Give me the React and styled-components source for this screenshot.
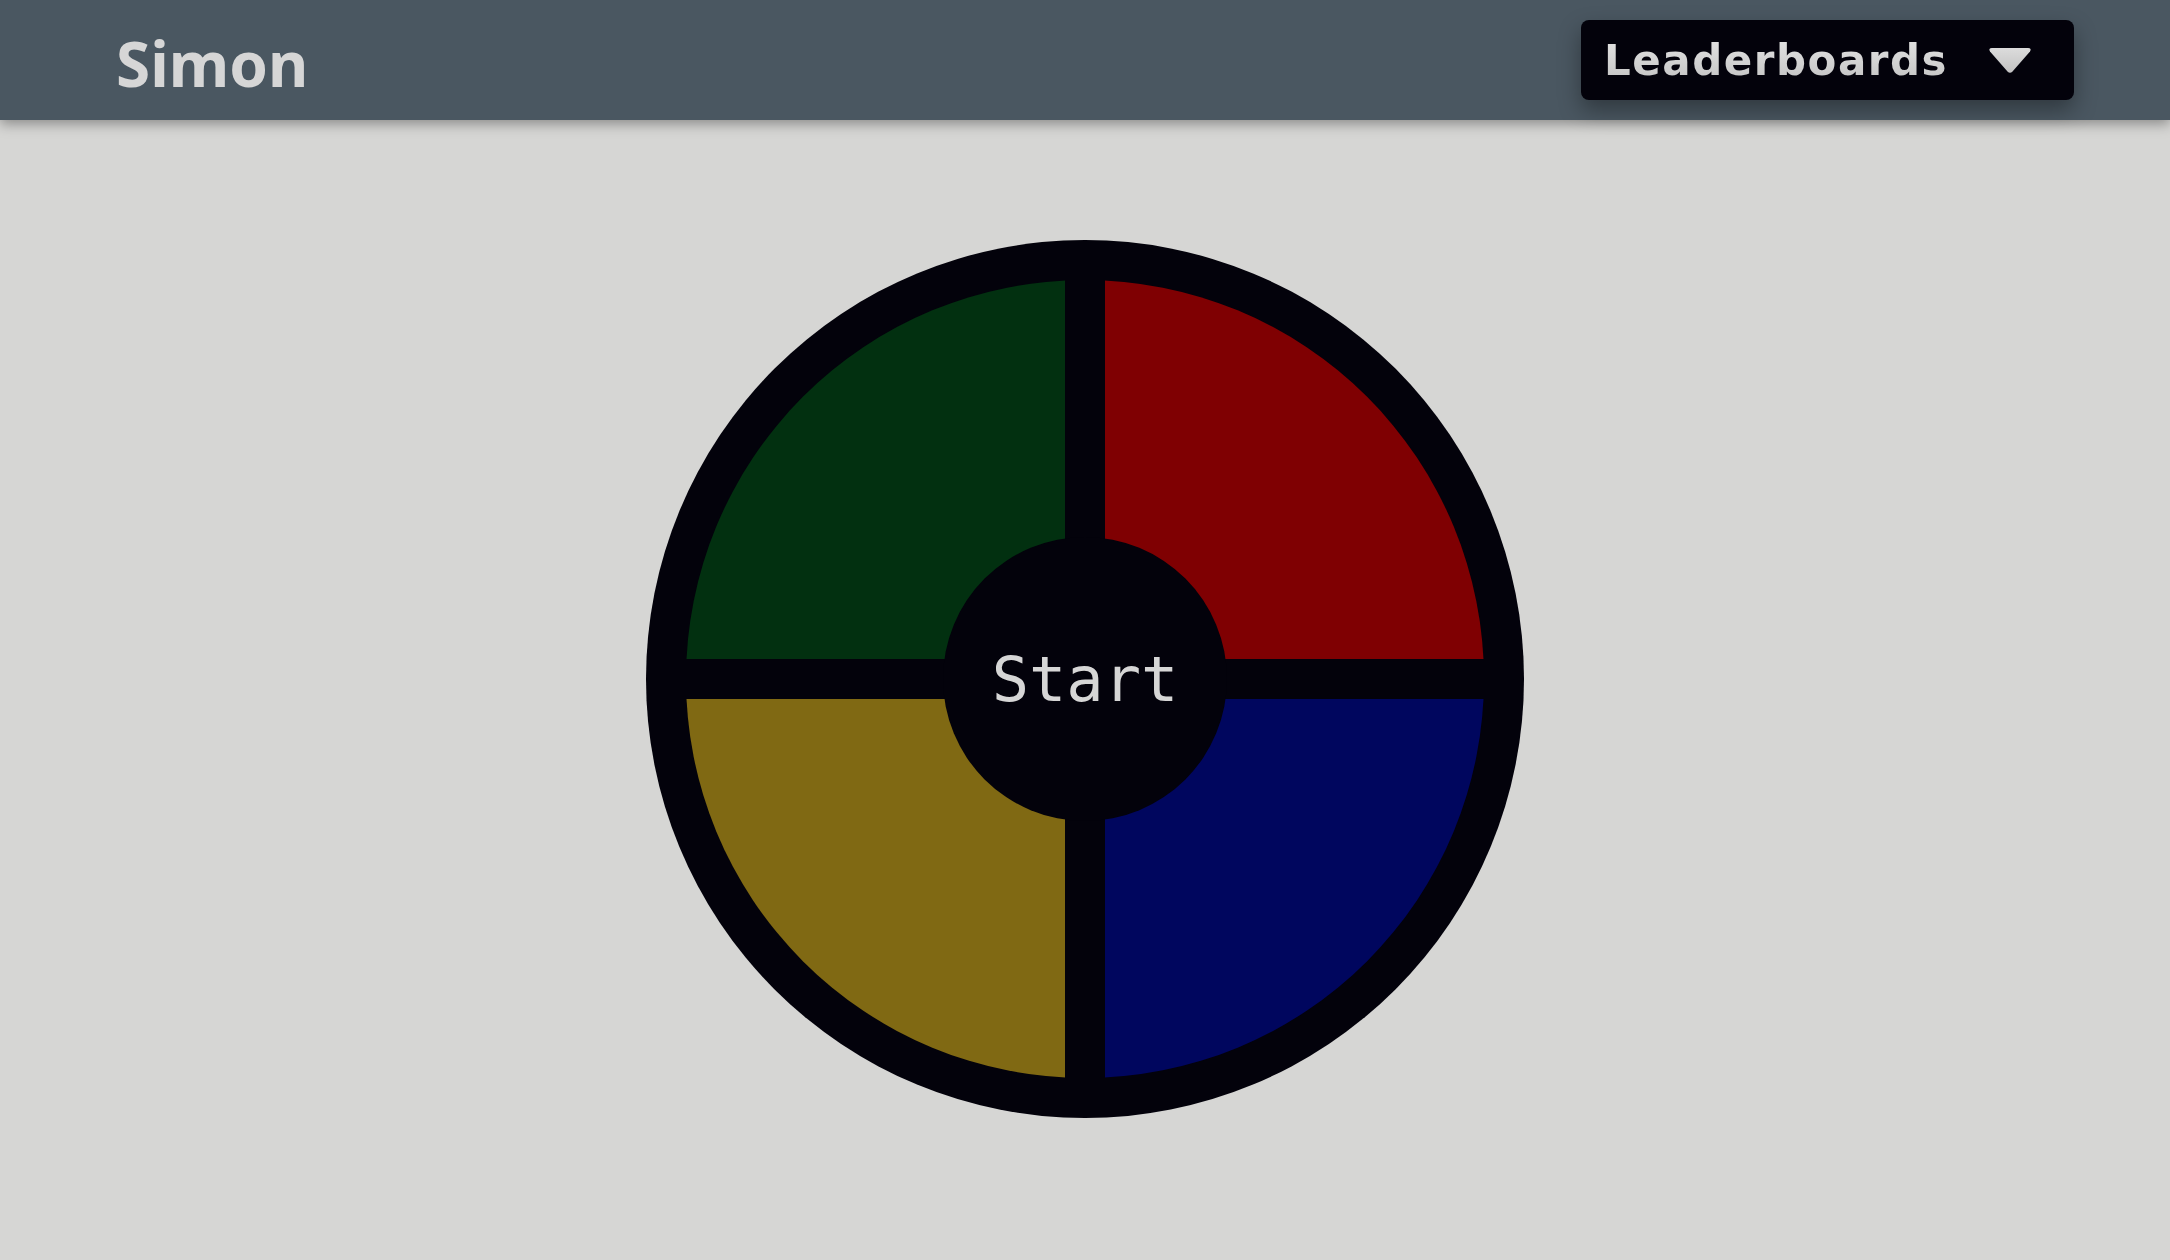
import styled, { createGlobalStyle } from "styled-components";

const GlobalStyle = createGlobalStyle`
    html, body {
        margin: 0;
        padding: 0;
        background: #d6d6d4;
    }
    body {
        font-family: "Noto Sans", "Liberation Sans", sans-serif;
        min-height: 100vh;
    }
`;

const pads = [
    { id: "green", color: "#023010" },
    { id: "red", color: "#7f0002" },
    { id: "yellow", color: "#806913" },
    { id: "blue", color: "#00065e" },
];

const App = () => {
    return (
        <>
            <GlobalStyle />
            <Header>
                <Title>Simon</Title>
                <Dropdown>
                    <Label>Leaderboards</Label>
                    <svg width="44" height="27" viewBox="0 0 44 27">
                        <defs>
                            <linearGradient id="caret" x1="0" y1="0" x2="0" y2="1">
                                <stop offset="0" stopColor="#dcdcdc" />
                                <stop offset="1" stopColor="#c2c2c2" />
                            </linearGradient>
                        </defs>
                        <path d="M4 1 H40 Q44 1 42 4.5 L24.5 24.5 Q22 27 19.5 24.5 L2 4.5 Q0 1 4 1 Z" fill="url(#caret)" />
                    </svg>
                </Dropdown>
            </Header>
            <Main>
                <Board>
                    <Disc>
                        {pads.map((pad) => (
                            <Pad key={pad.id} color={pad.color} />
                        ))}
                    </Disc>
                    <StartButton>Start</StartButton>
                </Board>
            </Main>
        </>
    );
};

export default App;

const Header = styled.header`
    height: 120px;
    background: #4a5761;
    display: flex;
    align-items: center;
    justify-content: space-between;
    padding: 0 96px 0 116px;
    box-shadow: 0 4px 12px rgba(0, 0, 0, 0.35);
    position: relative;
    z-index: 1;
`;

const Title = styled.h1`
    margin: 0;
    margin-top: 6px;
    font-family: "Noto Sans", sans-serif;
    font-weight: 700;
    font-size: 62px;
    color: #d6d6d6;
    line-height: 1;
`;

const Dropdown = styled.button`
    display: flex;
    align-items: center;
    gap: 40px;
    height: 80px;
    padding: 0 42px 0 23px;
    border: none;
    border-radius: 8px;
    background: #03020b;
    box-shadow: 0 10px 22px rgba(0, 0, 0, 0.35);
    cursor: pointer;
`;

const Label = styled.span`
    font-family: "DejaVu Sans", sans-serif;
    font-weight: 700;
    font-size: 42px;
    letter-spacing: 1.5px;
    background: linear-gradient(180deg, #e2e2e2 0%, #c4c4c4 100%);
    -webkit-background-clip: text;
    background-clip: text;
    color: transparent;
    line-height: 1;
    margin-top: 2px;
`;

const Main = styled.main`
    display: flex;
    justify-content: center;
    padding-top: 120px;
`;

const Board = styled.div`
    position: relative;
    width: 878px;
    height: 878px;
    border-radius: 50%;
    background: #03020b;
    padding: 40px;
    box-sizing: border-box;
    display: flex;
    align-items: center;
    justify-content: center;
`;

const Disc = styled.div`
    width: 798px;
    height: 798px;
    border-radius: 50%;
    overflow: hidden;
    display: grid;
    grid-template-columns: 1fr 1fr;
    grid-template-rows: 1fr 1fr;
    gap: 40px;
`;

const Pad = styled.div`
    background: ${(p) => p.color};
`;

const StartButton = styled.button`
    position: absolute;
    top: 50%;
    left: 50%;
    transform: translate(-50%, -50%);
    width: 284px;
    height: 284px;
    border-radius: 50%;
    border: none;
    background: #03020b;
    color: #d6d6d6;
    font-family: "DejaVu Sans Mono", monospace;
    font-size: 62px;
    padding: 0;
    cursor: pointer;
`;
